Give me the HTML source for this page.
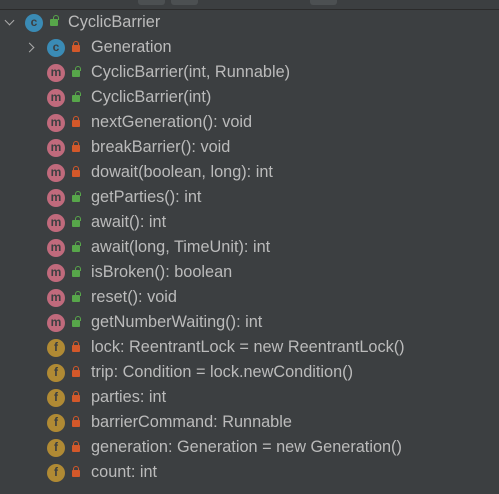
<!DOCTYPE html><html><head><style>
body{margin:0;width:499px;height:494px;background:#3c3f41;overflow:hidden;font-family:"Liberation Sans",sans-serif;font-size:16.3px;color:#bbbbbb;position:relative}
.top{position:absolute;left:0;top:0;width:499px;height:9px;background:#3c3f41;border-bottom:1px solid #2b2b2b}
.b{position:absolute;top:-4px;height:9px;border-radius:3px;background:#4c5052}
.r{position:absolute;height:25px;line-height:25px;left:0;width:499px}
.ic{position:absolute;width:18px;height:18px;border-radius:50%;top:4px;font-size:12px;line-height:17px;text-align:center;color:#3c3f41;font-weight:bold}
.m{background:#c06a7c;left:47px}
.f{background:#b08a34;left:47px}
.c{background:#3a8bb5}
.lk{position:absolute;top:10px;width:8px;height:7px;border-radius:1px}
.lk:before{content:"";position:absolute;left:1px;top:-4px;width:4px;height:4px;border:1.5px solid;border-bottom:none;border-radius:3px 3px 0 0}
.pr{background:#d3582a}.pr:before{border-color:#d3582a}
.pu{background:#57a64a}.pu:before{border-color:#57a64a;left:3px}
.t{position:absolute;left:91px}
.ar{position:absolute;width:6px;height:6px;border-right:1.5px solid #aaa;border-bottom:1.5px solid #aaa}
</style></head><body>
<div class="top"><div class="b" style="left:138px;width:27px"></div><div class="b" style="left:171px;width:27px"></div><div class="b" style="left:310px;width:27px"></div></div>
<div class="r" style="top:10px"><div class="ar" style="left:6px;top:7px;transform:rotate(45deg)"></div><div class="ic c" style="left:25px">c</div><div class="lk pu" style="left:50px;top:9px"></div><span class="t" style="left:68px">CyclicBarrier</span></div>
<div class="r" style="top:35px"><div class="ar" style="left:26px;top:9px;transform:rotate(-45deg)"></div><div class="ic c" style="left:47px">c</div><div class="lk pr" style="left:72px"></div><span class="t">Generation</span></div>
<div class="r" style="top:60px"><div class="ic m">m</div><div class="lk pu" style="left:72px"></div><span class="t">CyclicBarrier(int, Runnable)</span></div>
<div class="r" style="top:85px"><div class="ic m">m</div><div class="lk pu" style="left:72px"></div><span class="t">CyclicBarrier(int)</span></div>
<div class="r" style="top:110px"><div class="ic m">m</div><div class="lk pr" style="left:72px"></div><span class="t">nextGeneration(): void</span></div>
<div class="r" style="top:135px"><div class="ic m">m</div><div class="lk pr" style="left:72px"></div><span class="t">breakBarrier(): void</span></div>
<div class="r" style="top:160px"><div class="ic m">m</div><div class="lk pr" style="left:72px"></div><span class="t">dowait(boolean, long): int</span></div>
<div class="r" style="top:185px"><div class="ic m">m</div><div class="lk pu" style="left:72px"></div><span class="t">getParties(): int</span></div>
<div class="r" style="top:210px"><div class="ic m">m</div><div class="lk pu" style="left:72px"></div><span class="t">await(): int</span></div>
<div class="r" style="top:235px"><div class="ic m">m</div><div class="lk pu" style="left:72px"></div><span class="t">await(long, TimeUnit): int</span></div>
<div class="r" style="top:260px"><div class="ic m">m</div><div class="lk pu" style="left:72px"></div><span class="t">isBroken(): boolean</span></div>
<div class="r" style="top:285px"><div class="ic m">m</div><div class="lk pu" style="left:72px"></div><span class="t">reset(): void</span></div>
<div class="r" style="top:310px"><div class="ic m">m</div><div class="lk pu" style="left:72px"></div><span class="t">getNumberWaiting(): int</span></div>
<div class="r" style="top:335px"><div class="ic f">f</div><div class="lk pr" style="left:72px"></div><span class="t">lock: ReentrantLock = new ReentrantLock()</span></div>
<div class="r" style="top:360px"><div class="ic f">f</div><div class="lk pr" style="left:72px"></div><span class="t">trip: Condition = lock.newCondition()</span></div>
<div class="r" style="top:385px"><div class="ic f">f</div><div class="lk pr" style="left:72px"></div><span class="t">parties: int</span></div>
<div class="r" style="top:410px"><div class="ic f">f</div><div class="lk pr" style="left:72px"></div><span class="t">barrierCommand: Runnable</span></div>
<div class="r" style="top:435px"><div class="ic f">f</div><div class="lk pr" style="left:72px"></div><span class="t">generation: Generation = new Generation()</span></div>
<div class="r" style="top:460px"><div class="ic f">f</div><div class="lk pr" style="left:72px"></div><span class="t">count: int</span></div>
</body></html>
